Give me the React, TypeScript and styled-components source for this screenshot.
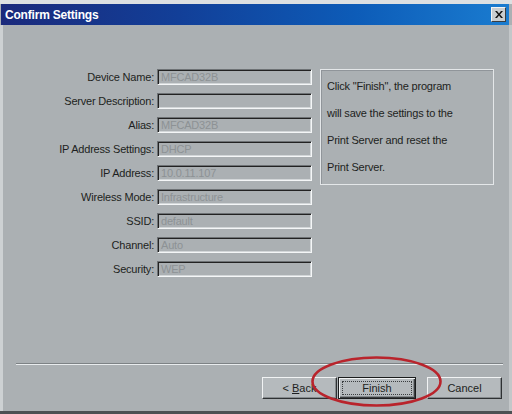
import styled, { createGlobalStyle } from 'styled-components';

const GlobalStyle = createGlobalStyle`
  html, body {
    margin: 0;
    padding: 0;
    background: #abb0b3;
  }
  body {
    font-family: 'Liberation Sans', Arial, sans-serif;
  }
`;

type Field = { label: string; value: string };

const fields: Field[] = [
  { label: 'Device Name:', value: 'MFCAD32B' },
  { label: 'Server Description:', value: '' },
  { label: 'Alias:', value: 'MFCAD32B' },
  { label: 'IP Address Settings:', value: 'DHCP' },
  { label: 'IP Address:', value: '10.0.11.107' },
  { label: 'Wireless Mode:', value: 'Infrastructure' },
  { label: 'SSID:', value: 'default' },
  { label: 'Channel:', value: 'Auto' },
  { label: 'Security:', value: 'WEP' },
];

const infoLines = [
  'Click "Finish", the program',
  'will save the settings to the',
  'Print Server and reset the',
  'Print Server.',
];

const App = () => {
  return (
    <>
      <GlobalStyle />
      <Window>
        <TitleBar>
          <Title>Confirm Settings</Title>
          <CloseButton>
            <svg width="8" height="7" viewBox="0 0 8 7">
              <path d="M0 0h2l2 2.5L6 0h2L5 3.5 8 7H6L4 4.5 2 7H0l3-3.5z" fill="#111" />
            </svg>
          </CloseButton>
        </TitleBar>
        <Body>
          <Content>
            <FormGrid>
              {fields.map((f) => (
                <FormRow key={f.label}>
                  <Label>{f.label}</Label>
                  <Input>{f.value}</Input>
                </FormRow>
              ))}
            </FormGrid>
            <InfoPanel>
              {infoLines.map((line) => (
                <InfoLine key={line}>{line}</InfoLine>
              ))}
            </InfoPanel>
          </Content>
          <Footer>
            <Separator />
            <ButtonRow>
              <Button>
                &lt;&nbsp;<u>B</u>ack
              </Button>
              <Highlight>
                <DefaultButton>
                  <FocusRect>Finish</FocusRect>
                </DefaultButton>
                <Ring viewBox="0 0 131 51">
                  <ellipse cx="65.5" cy="25.5" rx="64" ry="24" />
                </Ring>
              </Highlight>
              <Button $spaced>Cancel</Button>
            </ButtonRow>
          </Footer>
        </Body>
      </Window>
    </>
  );
};

export default App;

const Window = styled.div`
  width: 512px;
  height: 414px;
  box-sizing: border-box;
  display: flex;
  flex-direction: column;
  background: #abb0b3;
  border-top: 4px solid #dde0e2;
  border-bottom: 3px solid #4c5053;
  overflow: hidden;
`;

const TitleBar = styled.div`
  height: 21px;
  margin: 0 3px 0 1px;
  display: flex;
  align-items: center;
  justify-content: space-between;
  padding: 0 3px 0 4px;
  background: linear-gradient(90deg, #1b2a7c 0%, #123f98 35%, #0d5cb8 70%, #1a7cd0 100%);
`;

const Title = styled.span`
  color: #fff;
  font-family: 'Liberation Sans', Arial, sans-serif;
  font-weight: bold;
  font-size: 12px;
  letter-spacing: -0.2px;
`;

const CloseButton = styled.div`
  width: 13px;
  height: 13px;
  display: flex;
  align-items: center;
  justify-content: center;
  background: #c9cdd0;
  border-top: 1px solid #f2f4f5;
  border-left: 1px solid #f2f4f5;
  border-right: 1px solid #3a3d40;
  border-bottom: 1px solid #3a3d40;
`;

const Body = styled.div`
  flex: 1;
  display: flex;
  flex-direction: column;
  border-left: 3px solid #cdd1d3;
  border-right: 3px solid #c3c7c9;
`;

const Content = styled.div`
  display: flex;
  align-items: flex-start;
  padding-top: 44px;
`;

const FormGrid = styled.div`
  display: flex;
  flex-direction: column;
  gap: 8px;
`;

const FormRow = styled.div`
  display: grid;
  grid-template-columns: 151px 155px;
  column-gap: 3px;
  align-items: center;
  height: 16px;
`;

const Label = styled.span`
  text-align: right;
  font-size: 11px;
  color: #1d1f21;
  letter-spacing: -0.2px;
  white-space: nowrap;
`;

const Input = styled.div`
  height: 16px;
  box-sizing: border-box;
  padding: 1px 3px 0;
  font-size: 11px;
  line-height: 13px;
  color: #8d9295;
  letter-spacing: -0.2px;
  border-top: 1px solid #6e7275;
  border-left: 1px solid #6e7275;
  border-bottom: 1px solid #f4f6f7;
  border-right: 1px solid #f4f6f7;
  box-shadow: inset 1px 1px 0 #222, inset -1px -1px 0 #d2d6d8;
  white-space: nowrap;
  overflow: hidden;
`;

const InfoPanel = styled.div`
  margin-left: 8px;
  width: 174px;
  height: 116px;
  box-sizing: border-box;
  padding: 3px 6px 0;
  border: 1px solid #e4e7e9;
  box-shadow: inset 1px 1px 0 #90959a;
`;

const InfoLine = styled.div`
  font-size: 11px;
  line-height: 27px;
  color: #1d1f21;
  letter-spacing: -0.2px;
  white-space: nowrap;
`;

const Footer = styled.div`
  margin-top: auto;
  padding-bottom: 12px;
`;

const Separator = styled.div`
  height: 1px;
  margin: 0 6px 0 13px;
  background: #7d8285;
  border-bottom: 1px solid #e9ecee;
`;

const ButtonRow = styled.div`
  display: flex;
  justify-content: flex-end;
  align-items: center;
  padding: 12px 7px 0 0;
`;

const Button = styled.div<{ $spaced?: boolean }>`
  width: 75px;
  height: 22px;
  box-sizing: border-box;
  margin-left: ${(p) => (p.$spaced ? '11px' : '0')};
  display: flex;
  align-items: center;
  justify-content: center;
  font-size: 11px;
  color: #1d1f21;
  background: #b5babd;
  border-top: 1px solid #f1f3f4;
  border-left: 1px solid #f1f3f4;
  border-right: 1px solid #2e3133;
  border-bottom: 1px solid #2e3133;
  box-shadow: inset -1px -1px 0 #858a8d;

  u {
    text-decoration: underline;
  }
`;

const Highlight = styled.div`
  position: relative;
  margin-left: 1px;
`;

const DefaultButton = styled.div`
  width: 78px;
  height: 22px;
  box-sizing: border-box;
  padding: 3px;
  background: #b5babd;
  border: 1px solid #1a1c1d;
  box-shadow: inset 1px 1px 0 #f1f3f4, inset -1px -1px 0 #3a3d3f, inset -2px -2px 0 #858a8d;
`;

const FocusRect = styled.div`
  height: 100%;
  box-sizing: border-box;
  display: flex;
  align-items: center;
  justify-content: center;
  font-size: 11px;
  color: #1d1f21;
  border: 1px dotted #3a3d3f;
`;

// red marker drawn round the Finish button
const Ring = styled.svg`
  position: absolute;
  left: -27px;
  top: -21px;
  width: 131px;
  height: 51px;
  overflow: visible;
  pointer-events: none;

  ellipse {
    fill: none;
    stroke: #b9242c;
    stroke-width: 2.6;
  }
`;
